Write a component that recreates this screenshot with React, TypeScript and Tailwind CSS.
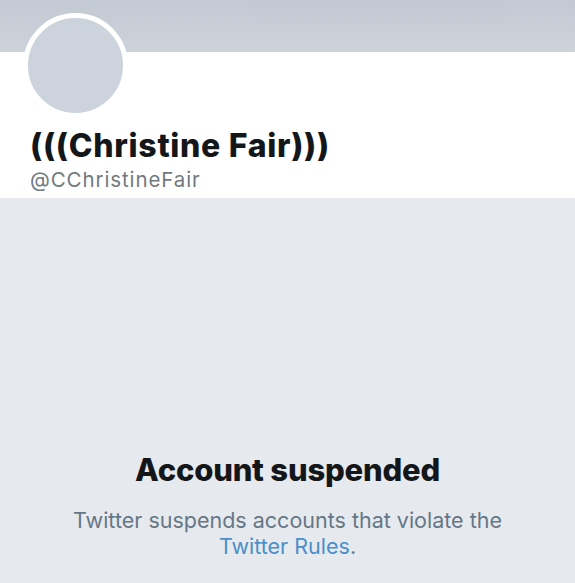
export default function App() {
  return (
    <div className="flex h-[583px] w-[575px] flex-col bg-[#e6e9ee] font-['Inter',sans-serif]">
      {/* Header */}
      <div className="relative h-[52px] bg-gradient-to-b from-[#c2c9d2] to-[#cdd3db]" />
      <div className="relative h-[146px] bg-white pl-[30px]">
        <div className="absolute left-[23px] top-[-39px] h-[105px] w-[105px] rounded-full border-[5px] border-white bg-[#ccd3dc]" />
        <div className="pt-[76px]">
          <h1 className="text-[32px] font-extrabold leading-[36px] tracking-[0.7px] text-[#14171a]">
            (((Christine Fair)))
          </h1>
          <p className="mt-[4px] text-[20.5px] leading-[24px] tracking-[0.9px] text-[#71797f]">
            @CChristineFair
          </p>
        </div>
      </div>

      {/* Suspended notice */}
      <div className="flex flex-1 flex-col items-center pt-[254px] text-center">
        <h2 className="text-[31px] font-extrabold leading-[36px] tracking-[-0.2px] text-[#14171a]">
          Account suspended
        </h2>
        <p className="mt-[19px] text-[21.5px] leading-[26px] text-[#657786]">
          Twitter suspends accounts that violate the
          <br />
          <span className="text-[#4a8fc8]">Twitter Rules</span>.
        </p>
      </div>
    </div>
  );
}
